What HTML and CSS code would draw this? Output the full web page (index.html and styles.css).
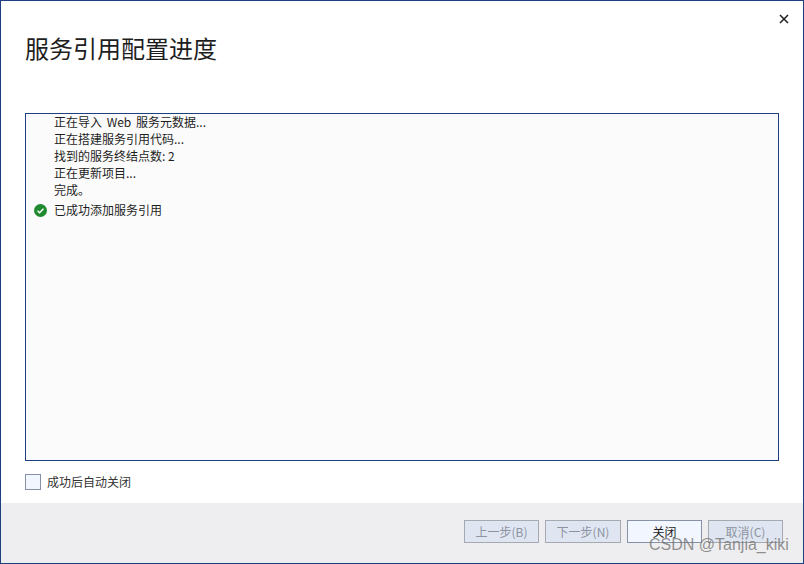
FILE: index.html
```html
<!DOCTYPE html>
<html lang="zh-CN">
<head>
    <meta charset="UTF-8">
    <title>服务引用配置进度</title>
    <link rel="stylesheet" href="styles.css">
</head>
<body>

<div class="dialog">
    <div class="close-row">
        <svg class="close-icon" width="10" height="10" viewBox="0 0 10 10">
            <path d="M1 1 L9 9 M9 1 L1 9" stroke="#1e1e1e" stroke-width="1.5" fill="none"/>
        </svg>
    </div>
    <h1 class="title">服务引用配置进度</h1>

    <div class="log-box">
        <div class="log-line log-web">正在导入 Web 服务元数据...</div>
        <div class="log-line">正在搭建服务引用代码...</div>
        <div class="log-line">找到的服务终结点数: 2</div>
        <div class="log-line">正在更新项目...</div>
        <div class="log-line">完成。</div>
        <div class="log-line log-result">
            <svg class="ok-icon" width="13" height="13" viewBox="0 0 14 14">
                <circle cx="7" cy="7" r="7" fill="#1f8a2e"/>
                <path d="M3.8 7.2 L6 9.4 L10.2 5" stroke="#fff" stroke-width="1.6" fill="none"/>
            </svg>
            已成功添加服务引用
        </div>
    </div>

    <label class="auto-close">
        <span class="check"></span>
        成功后自动关闭
    </label>

    <div class="footer">
        <button class="btn" disabled>上一步(B)</button>
        <button class="btn btn-wide" disabled>下一步(N)</button>
        <button class="btn btn-active">关闭</button>
        <button class="btn" disabled>取消(C)</button>
    </div>

    <div class="watermark">CSDN @Tanjia_kiki</div>
</div>

</body>
</html>
```

FILE: styles.css
```css
html, body {
    margin: 0;
    height: 100%;
}

body {
    font-family: "Noto Sans CJK SC", "Liberation Sans", sans-serif;
    background-color: #fff;
    color: #1e1e1e;
}

.dialog {
    position: relative;
    box-sizing: border-box;
    width: 804px;
    height: 564px;
    border: 1px solid #1e3f80;
    display: flex;
    flex-direction: column;
    overflow: hidden;
}

.close-row {
    display: flex;
    justify-content: flex-end;
    height: 14px;
    padding: 13px 14px 0 0;
}

.close-icon {
    display: block;
}

.title {
    margin: 5px 0 0 24px;
    height: 39px;
    font-size: 24px;
    line-height: 30px;
    font-weight: 400;
}

.log-box {
    box-sizing: border-box;
    width: 754px;
    height: 348px;
    margin: 41px 0 0 24px;
    padding: 0 0 0 28px;
    border: 1px solid #1e3f80;
    background-color: #fbfbfb;
}

.log-line {
    position: relative;
    height: 17px;
    font-size: 12px;
    line-height: 15px;
}

.log-web {
    word-spacing: 2px;
}

.log-result {
    margin-top: 3px;
}

.ok-icon {
    position: absolute;
    left: -20px;
    top: 2px;
}

.auto-close {
    display: flex;
    align-items: center;
    gap: 6px;
    height: 16px;
    margin: 13px 0 0 24px;
    font-size: 12px;
    line-height: 16px;
    color: #333;
}

.check {
    box-sizing: border-box;
    width: 16px;
    height: 16px;
    border: 1px solid #8792a8;
    background-color: #f2f6ff;
}

.footer {
    flex: 1;
    display: flex;
    justify-content: flex-end;
    gap: 6px;
    margin-top: 13px;
    padding: 17px 20px 0 0;
    background-color: #eeeef0;
}

.btn {
    box-sizing: border-box;
    width: 75px;
    height: 23px;
    padding: 0;
    border: 1px solid #a5a9b0;
    background-color: #dfe6f2;
    color: #8d93a0;
    font-family: inherit;
    font-size: 12px;
    line-height: 20px;
}

.btn-wide {
    width: 76px;
}

.btn-active {
    border-color: #8792a8;
    background-color: #f2f6ff;
    color: #1e1e1e;
}

.watermark {
    position: absolute;
    left: 648px;
    top: 535px;
    font-family: "Liberation Sans", sans-serif;
    font-size: 16px;
    line-height: 18px;
    color: rgba(110, 110, 110, 0.75);
    white-space: nowrap;
}
```
